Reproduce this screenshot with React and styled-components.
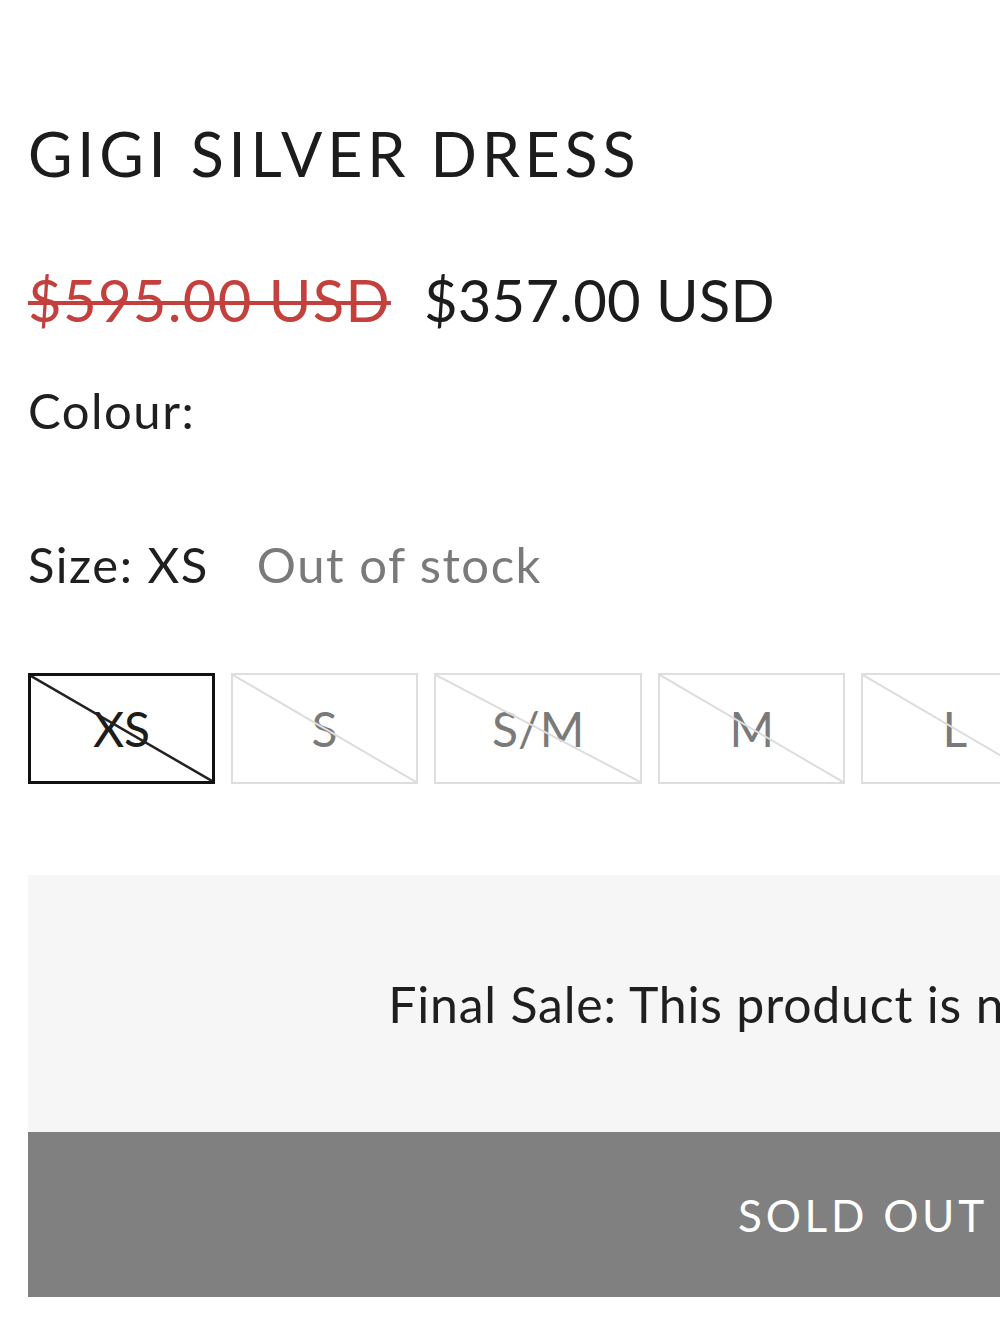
import React from 'react';
import styled, { createGlobalStyle } from 'styled-components';

const GlobalStyle = createGlobalStyle`
    html, body {
        margin: 0;
        padding: 0;
        background: #ffffff;
        overflow: hidden;
    }
    body {
        font-family: "Lato", "Open Sans", sans-serif;
        color: #1f1f1f;
    }
`;

const Page = styled.div`
    width: 1670px;
    padding: 117px 0 60px 28px;
`;

const Title = styled.h1`
    margin: 0;
    font-size: 61px;
    line-height: 73px;
    font-weight: 400;
    letter-spacing: 0.078em;
    text-transform: uppercase;
    color: #1c1c1c;
`;

const PriceRow = styled.div`
    display: flex;
    align-items: baseline;
    gap: 33px;
    margin-top: 75px;
    font-size: 58px;
    line-height: 70px;
`;

const OldPrice = styled.span`
    color: #c4403d;
    letter-spacing: 1.3px;
    text-decoration: line-through;
    text-decoration-thickness: 4px;
`;

const NewPrice = styled.span`
    color: #1c1c1c;
    letter-spacing: 0.2px;
`;

const Label = styled.div`
    display: flex;
    align-items: baseline;
    gap: 48px;
    margin-top: ${props => props.spaced};
    font-size: 49px;
    line-height: 58px;
    letter-spacing: 1.5px;
    color: #1f1f1f;
`;

const Muted = styled.span`
    color: #7a7a7a;
`;

const Sizes = styled.div`
    display: flex;
    gap: 16px;
    margin-top: 80px;
`;

const SizeBox = styled.div`
    position: relative;
    box-sizing: border-box;
    min-width: 187px;
    height: 111px;
    padding: 0 56px;
    display: flex;
    align-items: center;
    justify-content: center;
    font-size: 48px;
    color: ${props => props.selected ? "#1c1c1c" : "#7a7a7a"};
    border: ${props => props.selected ? "3px solid #111111" : "2px solid #dedede"};
    background: #ffffff;
`;

const Slash = styled.svg`
    position: absolute;
    inset: 0;
    width: 100%;
    height: 100%;
    pointer-events: none;
`;

const Notice = styled.div`
    margin-top: 91px;
    height: 257px;
    background: #f6f6f6;
    display: flex;
    align-items: center;
    justify-content: center;
    font-size: 50px;
    letter-spacing: 0.8px;
    color: #1f1f1f;
`;

const SoldOut = styled.div`
    height: 165px;
    background: #808080;
    display: flex;
    align-items: center;
    justify-content: center;
    font-size: 44px;
    letter-spacing: 0.085em;
    color: #ffffff;
    text-transform: uppercase;
`;

const sizes = ["XS", "S", "S/M", "M", "L", "XL"];

const Size = ({ label, selected }) => (
    <SizeBox selected={selected}>
        {label}
        <Slash viewBox="0 0 100 100" preserveAspectRatio="none">
            <line
                x1="0" y1="0" x2="100" y2="100"
                stroke={selected ? "#222222" : "#dddddd"}
                strokeWidth={selected ? 2.5 : 2}
                vectorEffect="non-scaling-stroke"
            />
        </Slash>
    </SizeBox>
);

export default function App() {
    return (
        <Page>
            <GlobalStyle />
            <Title>Gigi Silver Dress</Title>
            <PriceRow>
                <OldPrice>$595.00 USD</OldPrice>
                <NewPrice>$357.00 USD</NewPrice>
            </PriceRow>
            <Label spaced="46px">Colour:</Label>
            <Label spaced="96px">
                <span>Size: XS</span>
                <Muted>Out of stock</Muted>
            </Label>
            <Sizes>
                {sizes.map((s, i) => <Size key={s} label={s} selected={i === 0} />)}
            </Sizes>
            <Notice>Final Sale: This product is non-refundable.</Notice>
            <SoldOut>Sold out</SoldOut>
        </Page>
    );
}
